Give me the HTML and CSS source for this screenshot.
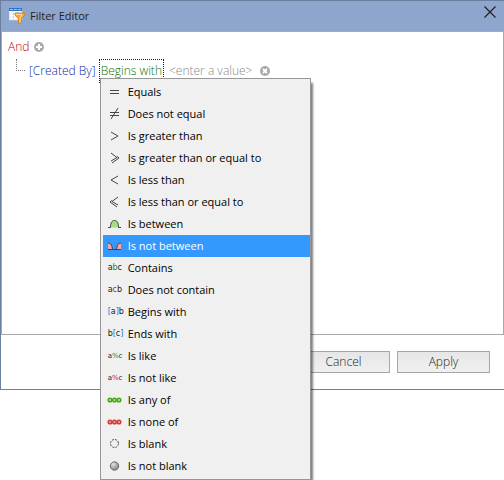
FILE: index.html
```html
<!DOCTYPE html>
<html lang="en">
<head>
<meta charset="utf-8">
<meta name="viewport" content="width=device-width, initial-scale=1">
<title>Filter Editor</title>
<link rel="stylesheet" href="styles.css">
</head>
<body>
<section class="dialog" role="dialog" aria-labelledby="title">
  <header class="titlebar">
    <svg class="app-icon" viewBox="0 0 16 16" aria-hidden="true">
      <path d="M0 0h13v12H0z" fill="#fff"/>
      <path d="M0 0h13v3H0z" fill="#2f74c8"/>
      <path d="M1 1h3v1H1zM5 1h3v1H5zM9 1h3v1H9z" fill="#8fc0f0"/>
      <path d="M0 3v9h13V3M4.500 3v9M8.500 3v9M0 6h13M0 9h13" fill="none" stroke="#c9d3e6" stroke-width=".7"/>
      <path d="M6 5h10v2l-3.500 3.500V14L9.500 16v-5.500L6 7z" fill="#f9a62b" stroke="#d9761a" stroke-width=".8"/>
      <path d="M7 6.500h6l-2 4v4" fill="none" stroke="#ffe29a"/>
    </svg>
    <h1 id="title" class="title">Filter Editor</h1>
    <button class="close" type="button" aria-label="Close">
      <svg viewBox="0 0 12 12" aria-hidden="true"><path d="M.5.5l11 11M11.500.5l-11 11" fill="none" stroke="#222" stroke-width="1.200"/></svg>
    </button>
  </header>

  <main class="filter">
    <div class="group">
      <a class="and" href="#">And</a>
      <button class="round" type="button" aria-label="Add condition">
        <svg viewBox="0 0 10 10" aria-hidden="true"><circle cx="5" cy="5" r="5" fill="#aaa"/><path d="M5 2v6M2 5h6" stroke="#fff" stroke-width="2"/></svg>
      </button>
    </div>
    <div class="condition">
      <span class="branch"></span>
      <a class="field" href="#">[Created By]</a>
      <div class="operator">
        <a class="operator-link" href="#">Begins with</a>
        <ul class="menu" role="menu">
          <li><button type="button" role="menuitem"><svg viewBox="0 0 16 16"><path d="M3 6.500h9M3 9.500h9" class="ink"/></svg>Equals</button></li>
          <li><button type="button" role="menuitem"><svg viewBox="0 0 16 16"><path d="M3 6.500h9M3 9.500h9M4 13l7-11" class="ink"/></svg>Does not equal</button></li>
          <li><button type="button" role="menuitem"><svg viewBox="0 0 16 16"><path d="M4 4l7 4-7 4" class="ink"/></svg>Is greater than</button></li>
          <li><button type="button" role="menuitem"><svg viewBox="0 0 16 16"><path d="M4 3l6 4.500L4 11M5 13l7-5-2-1.500" class="ink"/></svg>Is greater than or equal to</button></li>
          <li><button type="button" role="menuitem"><svg viewBox="0 0 16 16"><path d="M11 4L4 8l7 4" class="ink"/></svg>Is less than</button></li>
          <li><button type="button" role="menuitem"><svg viewBox="0 0 16 16"><path d="M11 3L5 7.500l6 3.500M10 13L3 8l2-1.500" class="ink"/></svg>Is less than or equal to</button></li>
          <li><button type="button" role="menuitem"><svg viewBox="0 0 16 16"><path d="M3.500 11.500c0-5 1.500-7 4-7s4 2 4 7z" fill="#a5dc7c"/><path d="M1 11.500h2.500c0-5 1.500-7 4-7s4 2 4 7H14" class="ink"/></svg>Is between</button></li>
          <li class="active"><button type="button" role="menuitem"><svg viewBox="0 0 16 16"><path d="M1 5c3 0 4 2.500 4.500 6.500H1zM14 5c-3 0-4 2.500-4.500 6.500H14z" fill="#f9a3a3"/><path d="M1 11.500h13M1 5c3 0 4 2.500 4.500 6.500M14 5c-3 0-4 2.500-4.500 6.500" class="ink"/></svg>Is not between</button></li>
          <li><button type="button" role="menuitem"><span class="glyph" aria-hidden="true">a<i class="green">b</i>c</span>Contains</button></li>
          <li><button type="button" role="menuitem"><span class="glyph" aria-hidden="true">a<i class="red">c</i>b</span>Does not contain</button></li>
          <li><button type="button" role="menuitem"><span class="glyph" aria-hidden="true"><i class="blue">[</i>a<i class="blue">]</i>b</span>Begins with</button></li>
          <li><button type="button" role="menuitem"><span class="glyph" aria-hidden="true">b<i class="blue">[</i>c<i class="blue">]</i></span>Ends with</button></li>
          <li><button type="button" role="menuitem"><span class="glyph small" aria-hidden="true">a<i class="green">%</i>c</span>Is like</button></li>
          <li><button type="button" role="menuitem"><span class="glyph small" aria-hidden="true">a<i class="red">%</i>c</span>Is not like</button></li>
          <li><button type="button" role="menuitem"><svg viewBox="0 0 16 16"><g fill="#b4ec84" stroke="#4ba51b" stroke-width="1.500"><circle cx="3" cy="8" r="1.800"/><circle cx="7.500" cy="8" r="1.800"/><circle cx="12" cy="8" r="1.800"/></g></svg>Is any of</button></li>
          <li><button type="button" role="menuitem"><svg viewBox="0 0 16 16"><g fill="#f7a5a5" stroke="#cf3c3c" stroke-width="1.500"><circle cx="3" cy="8" r="1.800"/><circle cx="7.500" cy="8" r="1.800"/><circle cx="12" cy="8" r="1.800"/></g></svg>Is none of</button></li>
          <li><button type="button" role="menuitem"><svg viewBox="0 0 16 16"><circle cx="7.500" cy="7.500" r="4" fill="none" stroke="#444" stroke-dasharray="2 1.140"/></svg>Is blank</button></li>
          <li><button type="button" role="menuitem"><svg viewBox="0 0 16 16"><defs><radialGradient id="ball" cx=".35" cy=".3" r=".8"><stop offset="0" stop-color="#e4e4e4"/><stop offset="1" stop-color="#777"/></radialGradient></defs><circle cx="7.500" cy="8" r="4.200" fill="url(#ball)" stroke="#555" stroke-width=".8"/></svg>Is not blank</button></li>
        </ul>
      </div>
      <a class="value" href="#">&lt;enter a value&gt;</a>
      <button class="round" type="button" aria-label="Remove condition">
        <svg viewBox="0 0 10 10" aria-hidden="true"><circle cx="5" cy="5" r="5" fill="#aaa"/><path d="M3 3l4 4M7 3L3 7" stroke="#fff" stroke-width="1.800"/></svg>
      </button>
    </div>
  </main>

  <footer class="actions">
    <button class="btn" type="button">Cancel</button>
    <button class="btn" type="button">Apply</button>
  </footer>
</section>
</body>
</html>
```

FILE: styles.css
```css
* {
  box-sizing: border-box;
}

body {
  min-height: 100vh;
  margin: 0;
  background: #fff;
  color: #000;
  font: 12px/16px "Open Sans", "Noto Sans", sans-serif;
}

a {
  text-decoration: none;
}

button {
  margin: 0;
  padding: 0;
  border: 0;
  background: none;
  color: inherit;
  font: inherit;
}

svg {
  display: block;
}

.dialog {
  border: 1px solid #6b7f9f;
  border-right: 0;
}

.titlebar {
  display: flex;
  align-items: center;
  gap: 5px;
  height: 30px;
  padding: 0 8px;
  background: #8ea6cd;
}

.app-icon {
  width: 16px;
  height: 16px;
}

.title {
  flex: 1;
  margin: 0;
  color: #222;
  font-size: 11px;
  font-weight: 400;
}

.close svg {
  width: 12px;
  height: 12px;
  margin-bottom: 8px;
}

.filter {
  min-height: 304px;
  padding: 7px 6px;
  border: 1px solid #a9a9a9;
}

.group,
.condition {
  display: flex;
  align-items: center;
  height: 16px;
  font-size: 12px;
  font-weight: 300;
}

.group {
  gap: 5px;
}

.condition {
  gap: 4px;
  margin-top: 8px;
}

.round svg {
  width: 10px;
  height: 10px;
}

.and {
  color: #c00010;
}

.branch {
  align-self: flex-start;
  width: 9px;
  height: 12px;
  margin: -4px 0 0 8px;
  border: dotted #777;
  border-width: 0 0 1px 1px;
}

.field {
  color: #0a28a8;
}

.operator {
  position: relative;
}

.operator-link {
  display: block;
  height: 22px;
  padding: 3px 1px;
  outline: 1px dotted #222;
  color: #0f7000;
}

.value {
  margin: 0 4px 0 2px;
  color: #888;
}

.menu {
  position: absolute;
  top: 18px;
  left: 0;
  z-index: 1;
  width: 211px;
  margin: 0;
  padding: 2px 0 2px 2px;
  list-style: none;
  border: 1px solid #979797;
  background: #f0f0f0;
  box-shadow: 3px 4px 2px -1px rgba(0, 0, 0, 0.5);
  font-size: 11px;
  font-weight: 400;
}

.menu button {
  display: flex;
  align-items: center;
  gap: 5px;
  width: 100%;
  height: 22px;
  padding-left: 4px;
  text-align: left;
  white-space: nowrap;
}

.menu svg,
.glyph {
  flex: none;
  width: 16px;
}

.menu svg {
  height: 16px;
}

.ink {
  fill: none;
  stroke: #444;
}

.active {
  background: #3399ff;
  color: #fff;
}

.glyph {
  padding-left: 1px;
  color: #222;
  font: 8px/16px "DejaVu Sans", sans-serif;
}

.glyph.small {
  font-size: 7px;
}

.glyph i {
  font-style: normal;
}

.green {
  color: #2f8a08;
}

.red {
  color: #c0202a;
}

.blue {
  color: #0b7be0;
}

.actions {
  display: flex;
  justify-content: flex-end;
  gap: 7px;
  padding: 16px 14px;
}

.btn {
  width: 93px;
  height: 22px;
  border: 1px solid #a6a6a6;
  background: linear-gradient(#e6e6e6, #f0f0f0);
  color: #222;
  font-weight: 300;
}
```
